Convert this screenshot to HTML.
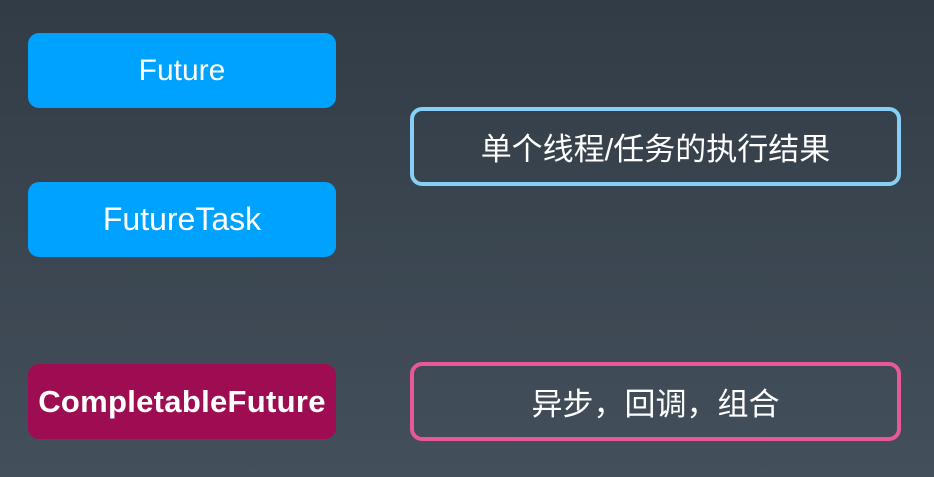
<!DOCTYPE html>
<html><head><style>
html,body{margin:0;padding:0}
body{width:934px;height:477px;overflow:hidden;position:relative;background:linear-gradient(#323c46,#434f5b);font-family:"Liberation Sans","Noto Sans CJK SC",sans-serif;color:#fff}
.b{position:absolute;display:flex;align-items:center;justify-content:center;box-sizing:border-box;border-radius:11px}
.l{left:28px;width:308px;height:75px;font-size:30px}
.blue{background:#00a2ff}
.r{left:410px;width:491px;height:79px;border-width:4px;border-style:solid;border-radius:12px;font-size:31px}
</style></head><body>
<div class="b l blue" style="top:33px">Future</div>
<div class="b l blue" style="top:182px;font-size:32px">FutureTask</div>
<div class="b l" style="top:364px;background:#9e0c51;font-weight:bold;font-size:31px;letter-spacing:0.3px">CompletableFuture</div>
<div class="b r" style="top:107px;border-color:#86cff5">单个线程/任务的执行结果</div>
<div class="b r" style="top:362px;border-color:#e9579b">异步，回调，组合</div>
</body></html>
